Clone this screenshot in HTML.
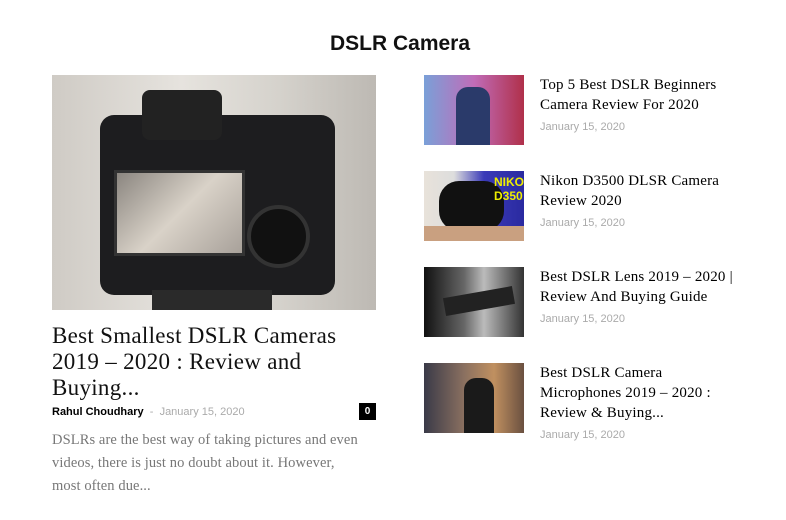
<!DOCTYPE html>
<html><head><style>
body{margin:0;width:786px;height:520px;background:#fff;position:relative;overflow:hidden;font-family:"Liberation Sans",sans-serif}
.a{position:absolute}
h1{position:absolute;top:32px;left:0;width:800px;text-align:center;margin:0;font-size:21px;font-weight:bold;color:#111}
.ser{font-family:"Liberation Serif",serif;white-space:nowrap}
.t{left:540px;font-size:15px;line-height:20px;color:#000;letter-spacing:0.2px}
.d{left:540px;font-size:11px;color:#aaa}
.th{left:424px;width:100px;height:70px}
</style></head><body>
<h1>DSLR Camera</h1>
<div class="a" style="left:52px;top:75px;width:324px;height:235px;background:linear-gradient(90deg,#cfcbc5,#e6e3de 40%,#d5d2cc 70%,#bdb9b3);overflow:hidden">
 <div class="a" style="left:48px;top:40px;width:235px;height:180px;background:#1d1d1f;border-radius:14px"></div>
 <div class="a" style="left:90px;top:15px;width:80px;height:50px;background:#222;border-radius:8px"></div>
 <div class="a" style="left:62px;top:95px;width:125px;height:80px;background:linear-gradient(135deg,#8b8680,#d9d2c8 50%,#a8a19a);border:3px solid #333"></div>
 <div class="a" style="left:195px;top:130px;width:55px;height:55px;border-radius:50%;background:#111;border:4px solid #333"></div>
 <div class="a" style="left:100px;top:215px;width:120px;height:25px;background:#2a2a2a"></div>
</div>
<div class="a ser" style="left:52px;top:323px;font-size:23px;line-height:26px;color:#111;letter-spacing:0.3px">Best Smallest DSLR Cameras<br>2019 – 2020 : Review and<br>Buying...</div>
<div class="a" style="left:52px;top:406px;font-size:11px;font-weight:bold;color:#000">Rahul Choudhary <span style="font-weight:normal;color:#aaa">&nbsp;-&nbsp; January 15, 2020</span></div>
<div class="a" style="left:359px;top:403px;width:17px;height:17px;background:#000;color:#fff;font-size:10px;font-weight:bold;text-align:center;line-height:17px">0</div>
<div class="a ser" style="left:52px;top:429px;font-size:14.5px;line-height:23px;color:#777;letter-spacing:0.1px">DSLRs are the best way of taking pictures and even<br>videos, there is just no doubt about it. However,<br>most often due...</div>

<div class="a th" style="top:75px;background:linear-gradient(90deg,#7aa0d8,#c06cb8 50%,#b0304a)"><div class="a" style="left:32px;top:12px;width:34px;height:58px;background:#2a3a6a;border-radius:12px 12px 0 0"></div></div>
<div class="a ser t" style="top:75px">Top 5 Best DSLR Beginners<br>Camera Review For 2020</div>
<div class="a d" style="top:121px">January 15, 2020</div>

<div class="a th" style="top:171px;background:linear-gradient(90deg,#e8e2da,#ddd 30%,#3a3ab8 60%,#2a2aa0)"><div class="a" style="left:15px;top:10px;width:65px;height:50px;background:#111;border-radius:20px"></div><div class="a" style="left:70px;top:4px;color:#ee0;font-weight:bold;font-size:12px">NIKO<br>D350</div><div class="a" style="left:0;top:55px;width:100px;height:15px;background:#c9a080"></div></div>
<div class="a ser t" style="top:171px">Nikon D3500 DLSR Camera<br>Review 2020</div>
<div class="a d" style="top:217px">January 15, 2020</div>

<div class="a th" style="top:267px;background:linear-gradient(90deg,#111,#666 40%,#bbb 60%,#333)"><div class="a" style="left:20px;top:25px;width:70px;height:18px;background:#222;transform:rotate(-10deg)"></div></div>
<div class="a ser t" style="top:267px">Best DSLR Lens 2019 – 2020 |<br>Review And Buying Guide</div>
<div class="a d" style="top:313px">January 15, 2020</div>

<div class="a th" style="top:363px;background:linear-gradient(90deg,#3a3a48,#8a7060 40%,#c09060 70%,#6a5040)"><div class="a" style="left:40px;top:15px;width:30px;height:55px;background:#1a1a1a;border-radius:12px 12px 0 0"></div></div>
<div class="a ser t" style="top:363px">Best DSLR Camera<br>Microphones 2019 – 2020 :<br>Review &amp; Buying...</div>
<div class="a d" style="top:429px">January 15, 2020</div>
</body></html>
